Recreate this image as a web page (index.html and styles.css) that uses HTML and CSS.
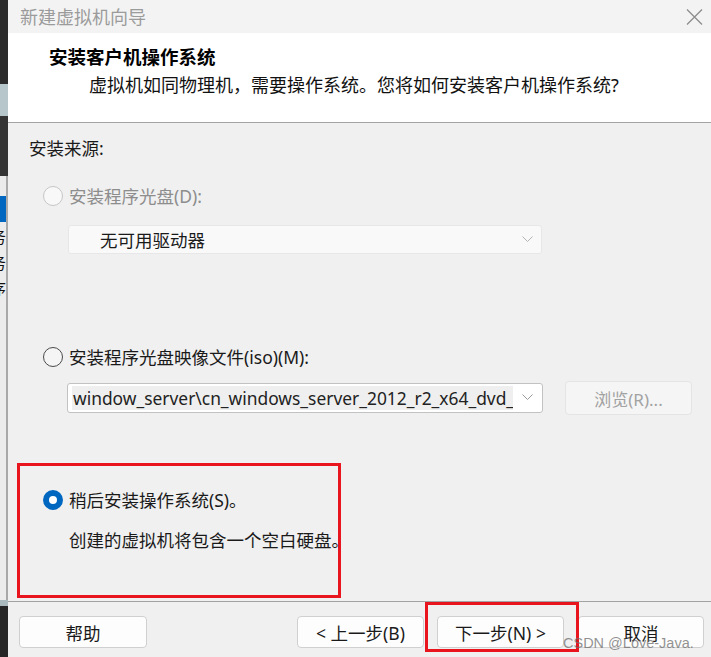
FILE: index.html
```html
<!DOCTYPE html>
<html lang="zh-CN">
<head>
<meta charset="utf-8">
<title>新建虚拟机向导</title>
<link rel="stylesheet" href="styles.css">
</head>
<body>
<div class="screen">
  <div class="bgstrip">
    <div class="seg seg-dark1"></div>
    <div class="seg seg-bluegray"></div>
    <div class="seg seg-dark2"></div>
    <div class="seg seg-light"></div>
    <div class="seg seg-blue"></div>
    <div class="seg seg-list"><span>务</span><span>务</span><span>序</span></div>
    <div class="seg seg-bluegray2"></div>
    <div class="seg seg-dark3"></div>
  </div>
  <div class="dialog">
    <div class="titlebar">
      <span class="title">新建虚拟机向导</span>
      <svg class="close" width="17" height="16" viewBox="0 0 17 16"><path d="M1 0.5 L16 15.5 M16 0.5 L1 15.5" stroke="#8c8c8c" stroke-width="1.3" fill="none"/></svg>
    </div>
    <div class="header">
      <div class="h-title">安装客户机操作系统</div>
      <div class="h-sub">虚拟机如同物理机，需要操作系统。您将如何安装客户机操作系统?</div>
    </div>
    <div class="content">
      <div class="section-label">安装来源:</div>
      <div class="option option-1 is-disabled"><span class="radio radio-disabled"></span><span class="label">安装程序光盘(D):</span></div>
      <div class="select">
        <span class="select-text">无可用驱动器</span>
        <svg class="chev" width="11" height="7" viewBox="0 0 11 7"><path d="M0.5 0.5 L5.5 5.5 L10.5 0.5" stroke="#b4b4b4" stroke-width="1" fill="none"/></svg>
      </div>
      <div class="option option-2"><span class="radio"></span><span class="label">安装程序光盘映像文件(iso)(M):</span></div>
      <div class="iso-row">
        <div class="combo">
          <span class="combo-text">window_server\cn_windows_server_2012_r2_x64_dvd_</span>
          <svg class="chev" width="11" height="7" viewBox="0 0 11 7"><path d="M0.5 0.5 L5.5 5.5 L10.5 0.5" stroke="#9a9a9a" stroke-width="1" fill="none"/></svg>
        </div>
        <div class="browse">浏览(R)...</div>
      </div>
      <div class="mark-box">
        <div class="option option-3"><span class="radio radio-checked"></span><span class="label">稍后安装操作系统(S)。</span></div>
        <div class="desc">创建的虚拟机将包含一个空白硬盘。</div>
      </div>
    </div>
    <div class="footer">
      <div class="btn btn-help">帮助</div>
      <div class="btn btn-back">&lt; 上一步(B)</div>
      <div class="btn btn-next">下一步(N) &gt;</div>
      <div class="btn btn-cancel">取消</div>
      <div class="mark-next"></div>
      <div class="watermark">CSDN @Love-Java.</div>
    </div>
  </div>
</div>
</body>
</html>
```

FILE: styles.css
```css
* { box-sizing: border-box; }
html, body { margin: 0; padding: 0; }
body {
  width: 711px;
  height: 657px;
  overflow: hidden;
  font-family: "Noto Sans", "Noto Sans CJK SC", sans-serif;
  color: #1a1a1a;
  background: #f0f0f0;
}
.screen {
  display: flex;
  width: 711px;
  height: 657px;
}

/* background application strip */
.bgstrip {
  width: 8px;
  display: flex;
  flex-direction: column;
  flex: none;
}
.seg { width: 8px; flex: none; overflow: hidden; }
.seg-dark1 { height: 84px; background: #2b2b2b; }
.seg-bluegray { height: 32px; background: #b7c6ca; }
.seg-dark2 { height: 60px; background: #343434; }
.seg-light { height: 20px; background: #ebebeb; border-right: 2px solid #a9a9a9; }
.seg-blue { height: 26px; background: #0067c0; border-right: 2px solid #a9a9a9; }
.seg-list {
  flex: 1;
  background: #ececec;
  border-right: 2px solid #a9a9a9;
  display: flex;
  flex-direction: column;
  padding-top: 2px;
  gap: 2px;
}
.seg-list span {
  display: block;
  margin-left: -10px;
  font-family: "Noto Sans CJK SC", sans-serif;
  font-size: 16px;
  line-height: 24px;
  color: #111;
  white-space: nowrap;
}
.seg-bluegray2 { height: 6px; background: #a9b9bd; }
.seg-dark3 { height: 51px; background: #262626; }

/* dialog */
.dialog {
  flex: 1;
  display: flex;
  flex-direction: column;
  background: #f0f0f0;
}
.titlebar {
  height: 33px;
  flex: none;
  background: #f3f3f3;
  display: flex;
  align-items: center;
  justify-content: space-between;
  padding: 0 8px 2px 12px;
}
.title {
  font-family: "Noto Sans CJK SC", sans-serif;
  font-size: 18px;
  line-height: 24px;
  color: #9b9b9b;
}
.close { display: block; margin-top: 2px; }

.header {
  height: 90px;
  flex: none;
  background: #ffffff;
  border-bottom: 1px solid #a3a3a3;
  padding-top: 11px;
}
.h-title {
  padding-left: 41px;
  font-family: "Noto Sans CJK SC", sans-serif;
  font-weight: 700;
  font-size: 18.5px;
  line-height: 24px;
  color: #000;
}
.h-sub {
  margin-top: 5px;
  padding-left: 81px;
  font-size: 18px;
  line-height: 24px;
  color: #111;
}

.content {
  flex: 1;
  display: flex;
  flex-direction: column;
  align-items: flex-start;
}
.section-label {
  margin-top: 13px;
  padding-left: 21px;
  font-size: 17.5px;
  line-height: 24px;
}
.option {
  display: flex;
  align-items: center;
  height: 24px;
  padding-left: 35px;
  font-size: 17.5px;
}
.option .label { margin-left: 6px; line-height: 24px; }
.is-disabled { color: #8d8d8d; }
.option-1 { margin-top: 24px; }
.option-2 { margin-top: 91px; }

.radio {
  width: 20px;
  height: 20px;
  border-radius: 50%;
  border: 1px solid #4a4a4a;
  background: #f5f5f5;
  flex: none;
}
.radio-disabled { border-color: #c6c6c6; background: #f8f8f8; }
.radio-checked { border: 6px solid #0067c0; background: #ffffff; }

.select {
  margin-top: 17px;
  margin-left: 60px;
  width: 474px;
  height: 29px;
  background: #f9f9f9;
  border: 1px solid #e7e7e7;
  border-radius: 3px;
  display: flex;
  align-items: center;
  justify-content: space-between;
  padding: 0 8px 0 31px;
}
.select-text { font-size: 17.5px; line-height: 24px; color: #1a1a1a; }

.iso-row {
  margin-top: 11px;
  margin-left: 59px;
  display: flex;
  align-items: center;
  gap: 22px;
}
.combo {
  width: 476px;
  height: 30px;
  background: #ffffff;
  border: 1px solid #c2c2c2;
  border-radius: 3px;
  display: flex;
  align-items: center;
  padding: 0 9px 0 4px;
  gap: 9px;
}
.combo-text {
  flex: 1;
  height: 24px;
  background: #efefef;
  font-size: 17.4px;
  line-height: 24px;
  padding-left: 1px;
  color: #222;
  white-space: nowrap;
  overflow: hidden;
}
.browse {
  width: 127px;
  height: 34px;
  margin-top: 1px;
  background: #f5f5f5;
  border: 1px solid #e4e4e4;
  border-radius: 4px;
  display: flex;
  align-items: center;
  justify-content: center;
  font-size: 17px;
  color: #a2a2a2;
}

.mark-box {
  margin-top: 48px;
  margin-left: 9px;
  width: 324px;
  height: 135px;
  border: 3px solid #e8141e;
  padding-top: 22px;
}
.option-3 { padding-left: 23px; }
.desc {
  margin-top: 16px;
  padding-left: 49px;
  font-size: 17.5px;
  line-height: 24px;
  white-space: nowrap;
}

.footer {
  position: relative;
  height: 56px;
  flex: none;
  border-top: 1px solid #a3a3a3;
  display: flex;
  align-items: flex-start;
  padding: 14px 7px 0 11px;
}
.btn {
  height: 32px;
  width: 127px;
  background: #fdfdfd;
  border: 1px solid #d0d0d0;
  border-radius: 4px;
  display: flex;
  align-items: center;
  justify-content: center;
  font-size: 17.5px;
  color: #1a1a1a;
  flex: none;
}
.btn-help { width: 128px; }
.btn-back { margin-left: auto; }
.btn-next { margin-left: 13px; }
.btn-cancel { margin-left: 14px; width: 126px; }

.mark-next {
  position: absolute;
  left: 417px;
  top: 0;
  width: 154px;
  height: 50px;
  border: 3px solid #e8141e;
}
.watermark {
  position: absolute;
  left: 555px;
  top: 31px;
  font-family: "Liberation Sans", sans-serif;
  font-size: 14.5px;
  line-height: 20px;
  color: rgba(110, 110, 110, 0.75);
  white-space: nowrap;
}
```
